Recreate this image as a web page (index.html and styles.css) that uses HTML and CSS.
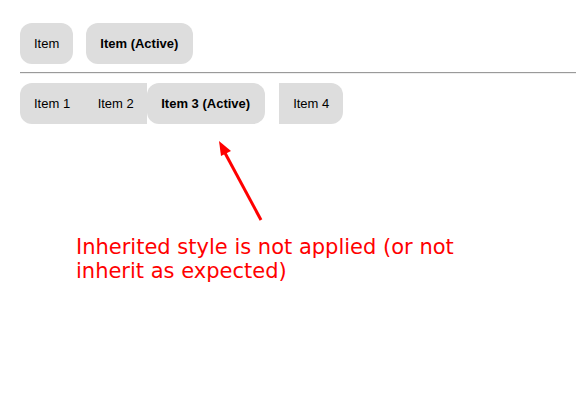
FILE: index.html
```html
<!DOCTYPE html>
<html lang="en">
  <head>
    <meta charset="UTF-8">
    <title>Inherited style</title>
    <link rel="stylesheet" href="styles.css">
  </head>
  <body>
    <div class="menu">
      <div class="item">Item</div>
      <div class="item item-active">Item (Active)</div>
    </div>
    <hr class="separateur">
    <div class="menu menu-groupe">
      <div class="item item-debut">Item 1</div>
      <div class="item item-milieu">Item 2</div>
      <div class="item item-active">Item 3 (Active)</div>
      <div class="item item-fin">Item 4</div>
    </div>
    <div class="annotation">
      <svg class="fleche" width="60" height="90" viewBox="0 0 60 90">
        <line x1="51" y1="81" x2="15" y2="14" stroke="#ff0000" stroke-width="3"/>
        <polygon points="9,2 11,17 21,12" fill="#ff0000"/>
      </svg>
      <p class="note">Inherited style is not applied (or not inherit as expected)</p>
    </div>
  </body>
</html>
```

FILE: styles.css
```css
body {
  margin: 0;
  padding: 23px 0 0 20px;
  font-family: "Liberation Sans", Arial, sans-serif;
  font-size: 13px;
  color: #000;
  background: #fff;
}
.menu {
  display: flex;
  gap: 13px;
}
.menu-groupe {
  gap: 0;
}
.item {
  background: #dddddd;
  border-radius: 12px;
  padding: 13px 14px;
  line-height: 15px;
}
.item-active {
  font-weight: bold;
  padding-right: 15px;
}
.item-debut {
  padding-right: 13.5px;
  border-radius: 12px 0 0 12px;
}
.item-milieu {
  padding-right: 13.5px;
  border-radius: 0;
}
.item-fin {
  margin-left: 14px;
  padding-right: 13.5px;
  border-radius: 0 12px 12px 0;
}
.separateur {
  margin: 8px 0 9px 0;
  border: 0;
  border-top: 1px solid #9a9a9a;
  border-bottom: 1px solid #eeeeee;
}
.annotation {
  position: relative;
  padding-top: 111px;
}
.fleche {
  position: absolute;
  left: 190px;
  top: 15px;
}
.note {
  margin: 0 0 0 56px;
  width: 420px;
  font-family: "DejaVu Sans", sans-serif;
  font-size: 21px;
  line-height: 24px;
  color: #ff0000;
}
```
